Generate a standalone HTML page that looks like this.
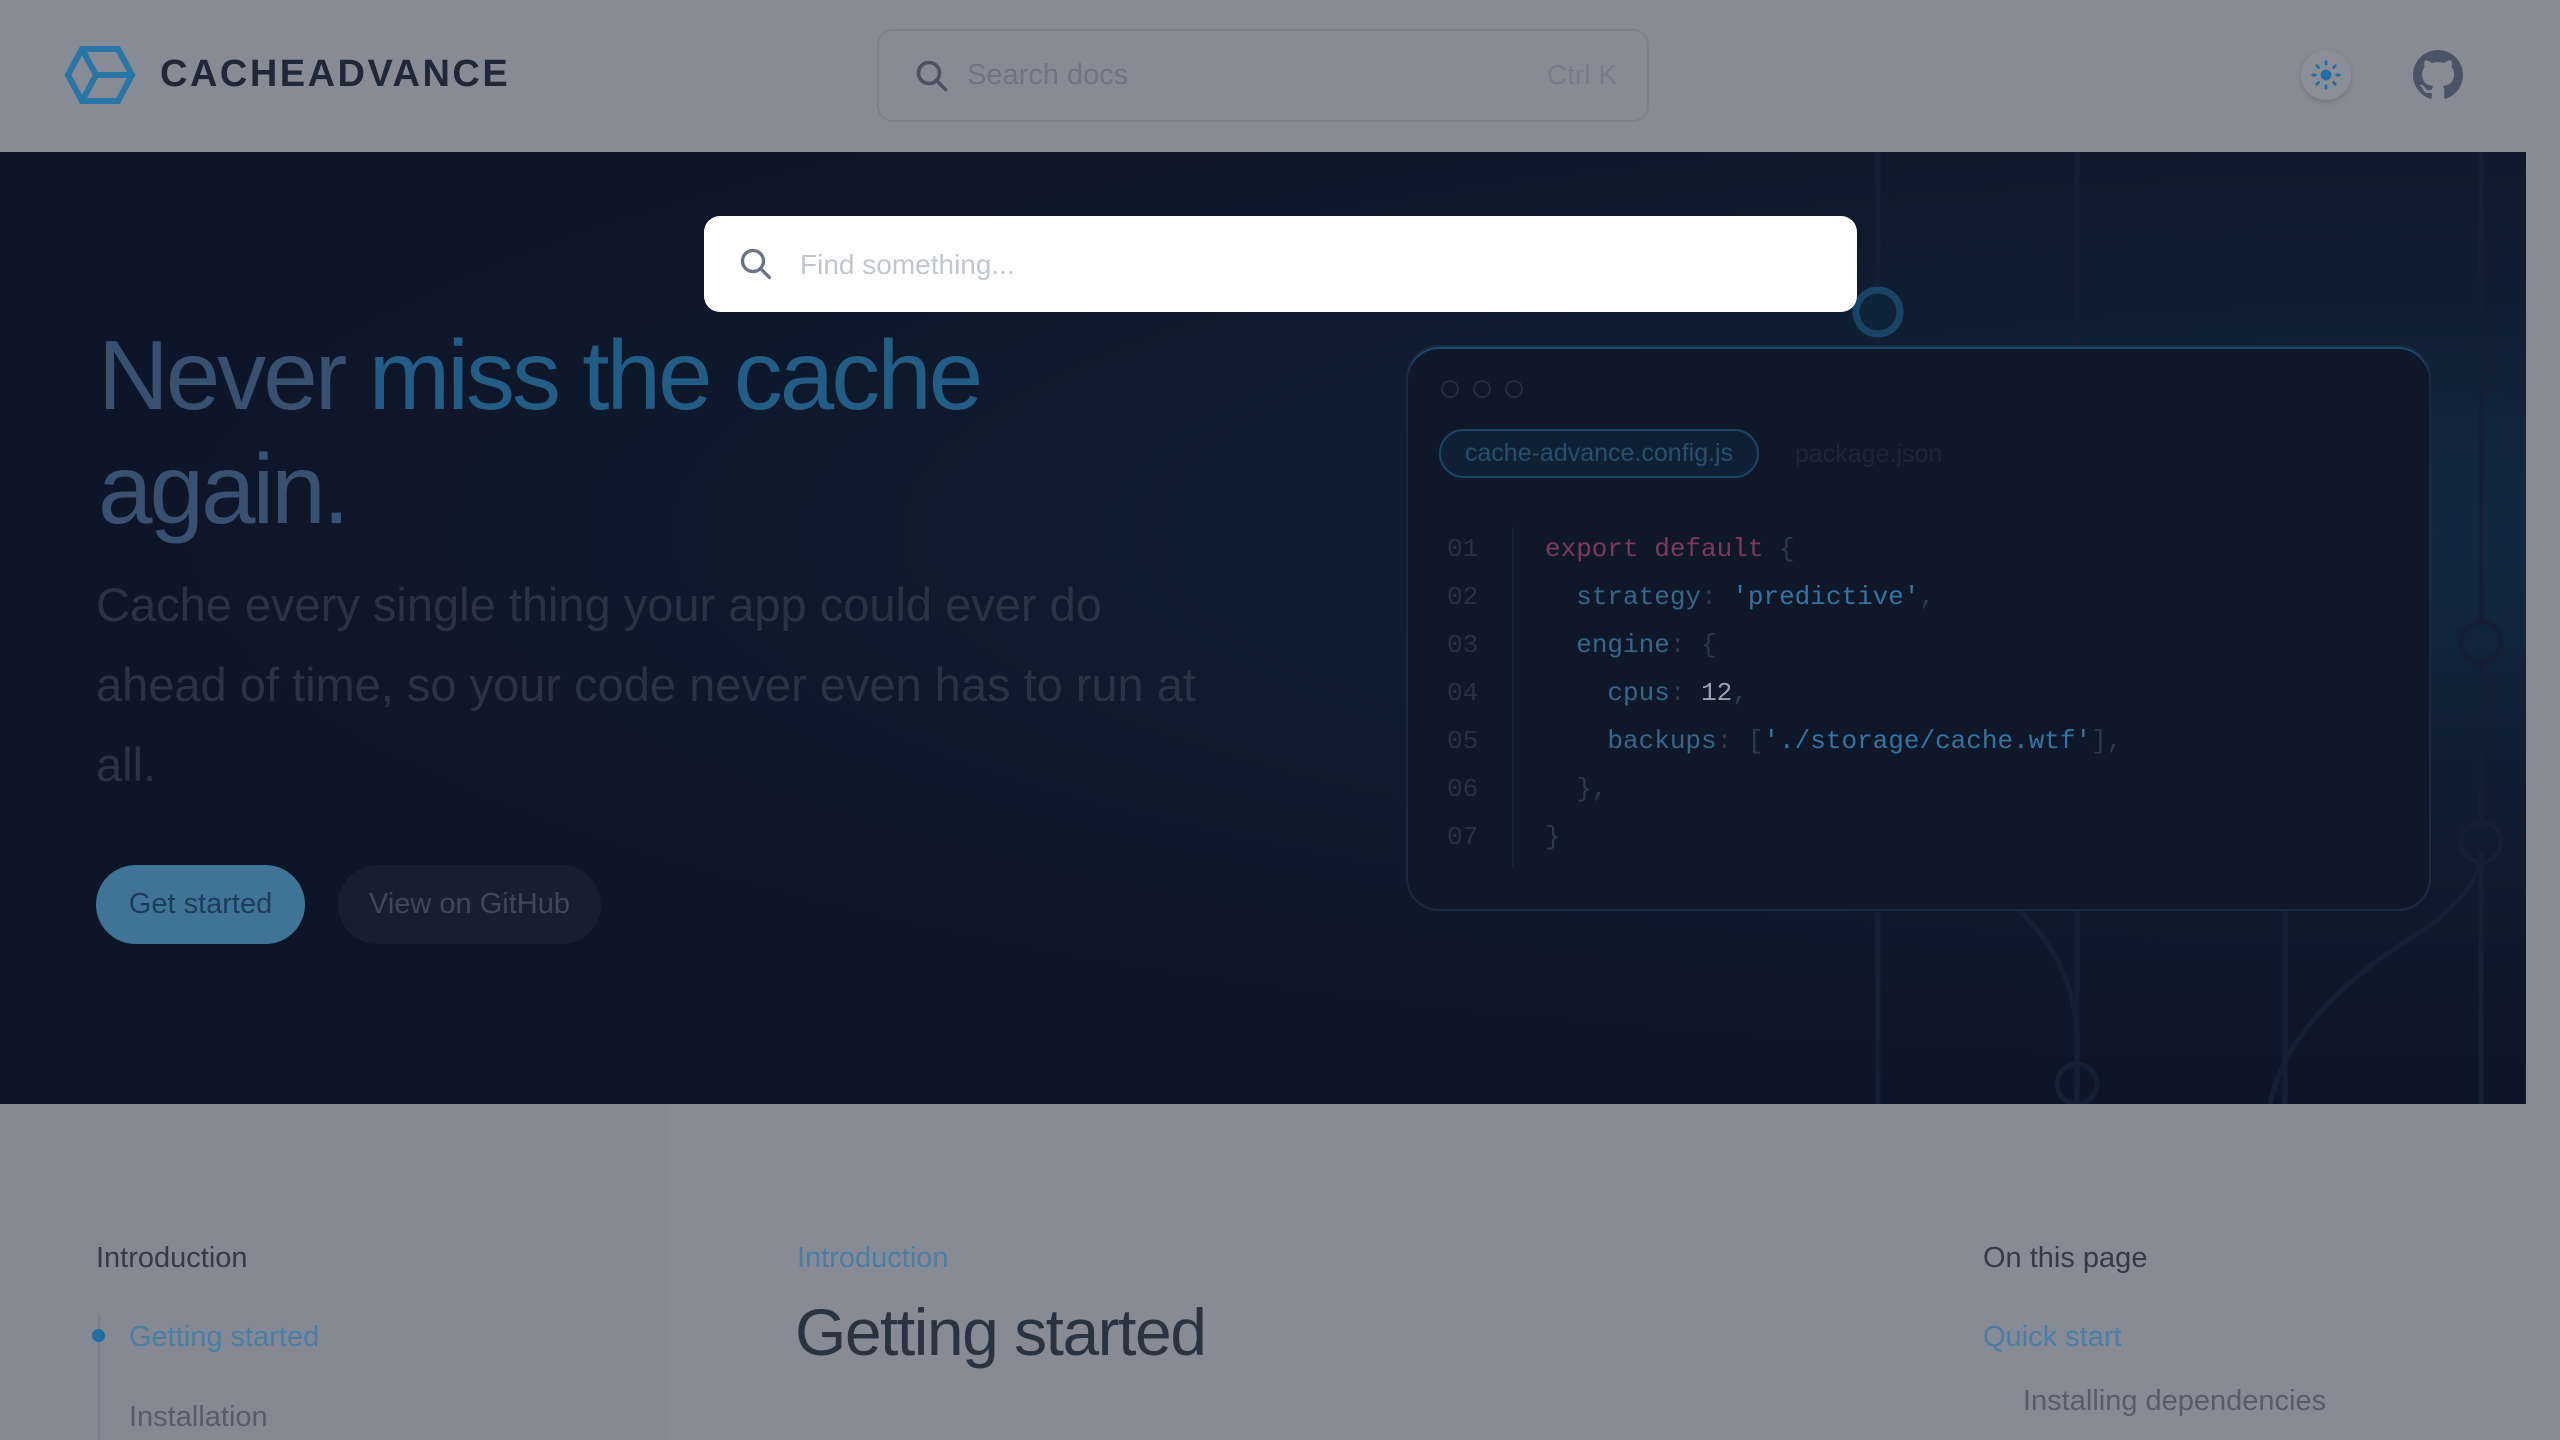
<!DOCTYPE html>
<html><head><meta charset="utf-8"><style>
*{margin:0;padding:0;box-sizing:border-box}
body{width:2560px;height:1440px;overflow:hidden;background:#878b95;font-family:"Liberation Sans",sans-serif;position:relative}
.abs{position:absolute}
.hero{left:0;top:152px;width:2526px;height:952px;background:radial-gradient(ellipse at 95% 40%,#13293f 0%,#0f1a2e 40%,#0d1628 70%),#0d1628;overflow:hidden}
.mono{font-family:"Liberation Mono","DejaVu Sans Mono",monospace}
.code div{height:48px;line-height:48px;font-size:26px;white-space:pre}
</style></head><body>
<svg class="abs" style="left:64px;top:45px" width="72" height="60" viewBox="0 0 72 60"><path d="M18 4 L54 4 L68 30 L54 56 L18 56 L4 30 Z" fill="none" stroke="#2876a5" stroke-width="6"/><path d="M18 4 L32 30 L18 56 M32 30 L68 30" fill="none" stroke="#2876a5" stroke-width="6"/></svg>
<div class="abs" style="left:160px;top:53px;font-size:38px;font-weight:bold;color:#1f2838;letter-spacing:2.5px">CACHEADVANCE</div>
<div class="abs" style="left:877px;top:29px;width:772px;height:93px;border:2px solid #7d818c;border-radius:16px"></div>
<svg class="abs" style="left:914px;top:58px" width="36" height="36" viewBox="0 0 24 24"><circle cx="10" cy="10" r="7" fill="none" stroke="#4a5263" stroke-width="2.4"/><path d="M15 15 L21 21" stroke="#4a5263" stroke-width="2.4" stroke-linecap="round"/></svg>
<div class="abs" style="left:967px;top:59px;font-size:29px;color:#6d7482">Search docs</div>
<div class="abs" style="left:1547px;top:59px;font-size:28px;color:#767c88">Ctrl K</div>
<div class="abs" style="left:2301px;top:50px;width:50px;height:50px;border-radius:25px;background:#8a8e98;box-shadow:0 2px 6px rgba(0,0,0,.15)"></div>
<svg class="abs" style="left:2310px;top:59px" width="32" height="32" viewBox="0 0 24 24"><circle cx="12" cy="12" r="4" fill="#1f6fa0"/><g stroke="#1f6fa0" stroke-width="2" stroke-linecap="round"><path d="M12 2v2M12 20v2M2 12h2M20 12h2M5 5l1.4 1.4M17.6 17.6L19 19M5 19l1.4-1.4M17.6 6.4L19 5"/></g></svg>
<svg class="abs" style="left:2413px;top:50px" width="50" height="50" viewBox="0 0 16 16"><path fill="#4b5366" d="M8 0C3.58 0 0 3.58 0 8c0 3.54 2.29 6.53 5.47 7.59.4.07.55-.17.55-.38 0-.19-.01-.82-.01-1.49-2.01.37-2.53-.49-2.69-.94-.09-.23-.48-.94-.82-1.13-.28-.15-.68-.52-.01-.53.63-.01 1.08.58 1.23.82.72 1.21 1.87.87 2.33.66.07-.52.28-.87.51-1.07-1.78-.2-3.64-.89-3.64-3.95 0-.87.31-1.59.82-2.15-.08-.2-.36-1.02.08-2.12 0 0 .67-.21 2.2.82.64-.18 1.32-.27 2-.27.68 0 1.36.09 2 .27 1.53-1.04 2.2-.82 2.2-.82.44 1.1.16 1.92.08 2.12.51.56.82 1.27.82 2.15 0 3.07-1.87 3.75-3.65 3.95.29.25.54.73.54 1.48 0 1.07-.01 1.93-.01 2.2 0 .21.15.46.55.38A8.013 8.013 0 0016 8c0-4.42-3.58-8-8-8z"/></svg>

<div class="abs hero">
<svg class="abs" style="left:0;top:0" width="2526" height="952"><g fill="none" stroke="#141f33" stroke-width="5">
<path d="M1878 0 V134 M1878 184 V355 M1878 760 V952"/>
<path d="M2077 0 V952"/>
<path d="M2481 0 V470 M2481 510 V670 M2481 710 V952"/>
<path d="M2285 720 V952"/>
<path d="M2270 952 Q2290 860 2420 780 Q2480 740 2481 700"/>
<path d="M1980 730 Q2080 790 2077 900"/>
<circle cx="2077" cy="932" r="20"/><circle cx="2481" cy="490" r="20"/><circle cx="2481" cy="690" r="20"/>
</g><circle cx="1878" cy="160" r="22" fill="#0f2338" stroke="#1a4466" stroke-width="7"/></svg>
<div class="abs" style="left:98px;top:166px;font-size:98px;line-height:114px;color:#3a5070;letter-spacing:-3px;font-weight:300">Never <span style="color:#235c84">miss the cache</span><br>again.</div>
<div class="abs" style="left:96px;top:413px;width:1140px;font-size:47px;line-height:80px;color:#2a3343;font-weight:300">Cache every single thing your app could ever do ahead of time, so your code never even has to run at all.</div>
<div class="abs" style="left:96px;top:713px;width:209px;height:79px;border-radius:40px;background:#3f7497;color:#1d3c57;font-size:29px;line-height:79px;text-align:center">Get started</div>
<div class="abs" style="left:338px;top:713px;width:263px;height:79px;border-radius:40px;background:#161f30;color:#3f4859;font-size:29px;line-height:79px;text-align:center">View on GitHub</div>
<div class="abs" style="left:1406px;top:193px;width:1025px;height:566px;border-radius:33px;background:#0f1829;border:2px solid #1b2a40;box-shadow:0 2px 0 #1e4a70 inset"></div>
<svg class="abs" style="left:1438px;top:225px" width="90" height="24"><g fill="none" stroke="#222c3d" stroke-width="2"><circle cx="12" cy="12" r="8"/><circle cx="44" cy="12" r="8"/><circle cx="76" cy="12" r="8"/></g></svg>
<div class="abs" style="left:1439px;top:277px;width:320px;height:49px;border-radius:25px;border:2px solid #1d4562;background:#0f2034;color:#2a4f6d;font-size:25px;line-height:45px;text-align:center">cache-advance.config.js</div>
<div class="abs" style="left:1795px;top:288px;font-size:25px;color:#1c2636">package.json</div>
<div class="abs" style="left:1512px;top:375px;width:2px;height:340px;background:#162236"></div>
<div class="abs mono code" style="left:1447px;top:373px;color:#283243"><div>01</div><div>02</div><div>03</div><div>04</div><div>05</div><div>06</div><div>07</div></div>
<div class="abs mono code" style="left:1545px;top:373px;color:#2e394a"><div><span style="color:#7c3a5d">export default</span> {</div><div>  <span style="color:#386687">strategy</span>: <span style="color:#3574a0">'predictive'</span>,</div><div>  <span style="color:#386687">engine</span>: {</div><div>    <span style="color:#386687">cpus</span>: <span style="color:#9aa3b0">12</span>,</div><div>    <span style="color:#386687">backups</span>: [<span style="color:#3574a0">'./storage/cache.wtf'</span>],</div><div>  },</div><div>}</div></div>
</div>

<div class="abs" style="left:704px;top:216px;width:1153px;height:96px;background:#fff;border-radius:16px"></div>
<svg class="abs" style="left:738px;top:246px" width="36" height="36" viewBox="0 0 24 24"><circle cx="10" cy="10" r="7" fill="none" stroke="#6b7280" stroke-width="2.2"/><path d="M15 15 L21 21" stroke="#6b7280" stroke-width="2.2" stroke-linecap="round"/></svg>
<div class="abs" style="left:800px;top:249px;font-size:28px;color:#c2c6cd">Find something...</div>

<div class="abs" style="left:0;top:1104px;width:670px;height:336px;background:#858994"></div>
<div class="abs" style="left:96px;top:1242px;font-size:29px;color:#323b4a">Introduction</div>
<div class="abs" style="left:98px;top:1314px;width:2px;height:126px;background:#7a7f8b"></div>
<div class="abs" style="left:92px;top:1329px;width:13px;height:13px;border-radius:7px;background:#1f6fa0"></div>
<div class="abs" style="left:129px;top:1321px;font-size:29px;color:#4a7ea3">Getting started</div>
<div class="abs" style="left:129px;top:1401px;font-size:29px;color:#555c6b">Installation</div>
<div class="abs" style="left:797px;top:1242px;font-size:29px;color:#4a7ea3">Introduction</div>
<div class="abs" style="left:795px;top:1294px;font-size:66px;color:#2a3342;letter-spacing:-1.5px">Getting started</div>
<div class="abs" style="left:1983px;top:1242px;font-size:29px;color:#323b4a">On this page</div>
<div class="abs" style="left:1983px;top:1321px;font-size:29px;color:#4a7ea3">Quick start</div>
<div class="abs" style="left:2023px;top:1385px;font-size:29px;color:#555c6b">Installing dependencies</div>
</body></html>
